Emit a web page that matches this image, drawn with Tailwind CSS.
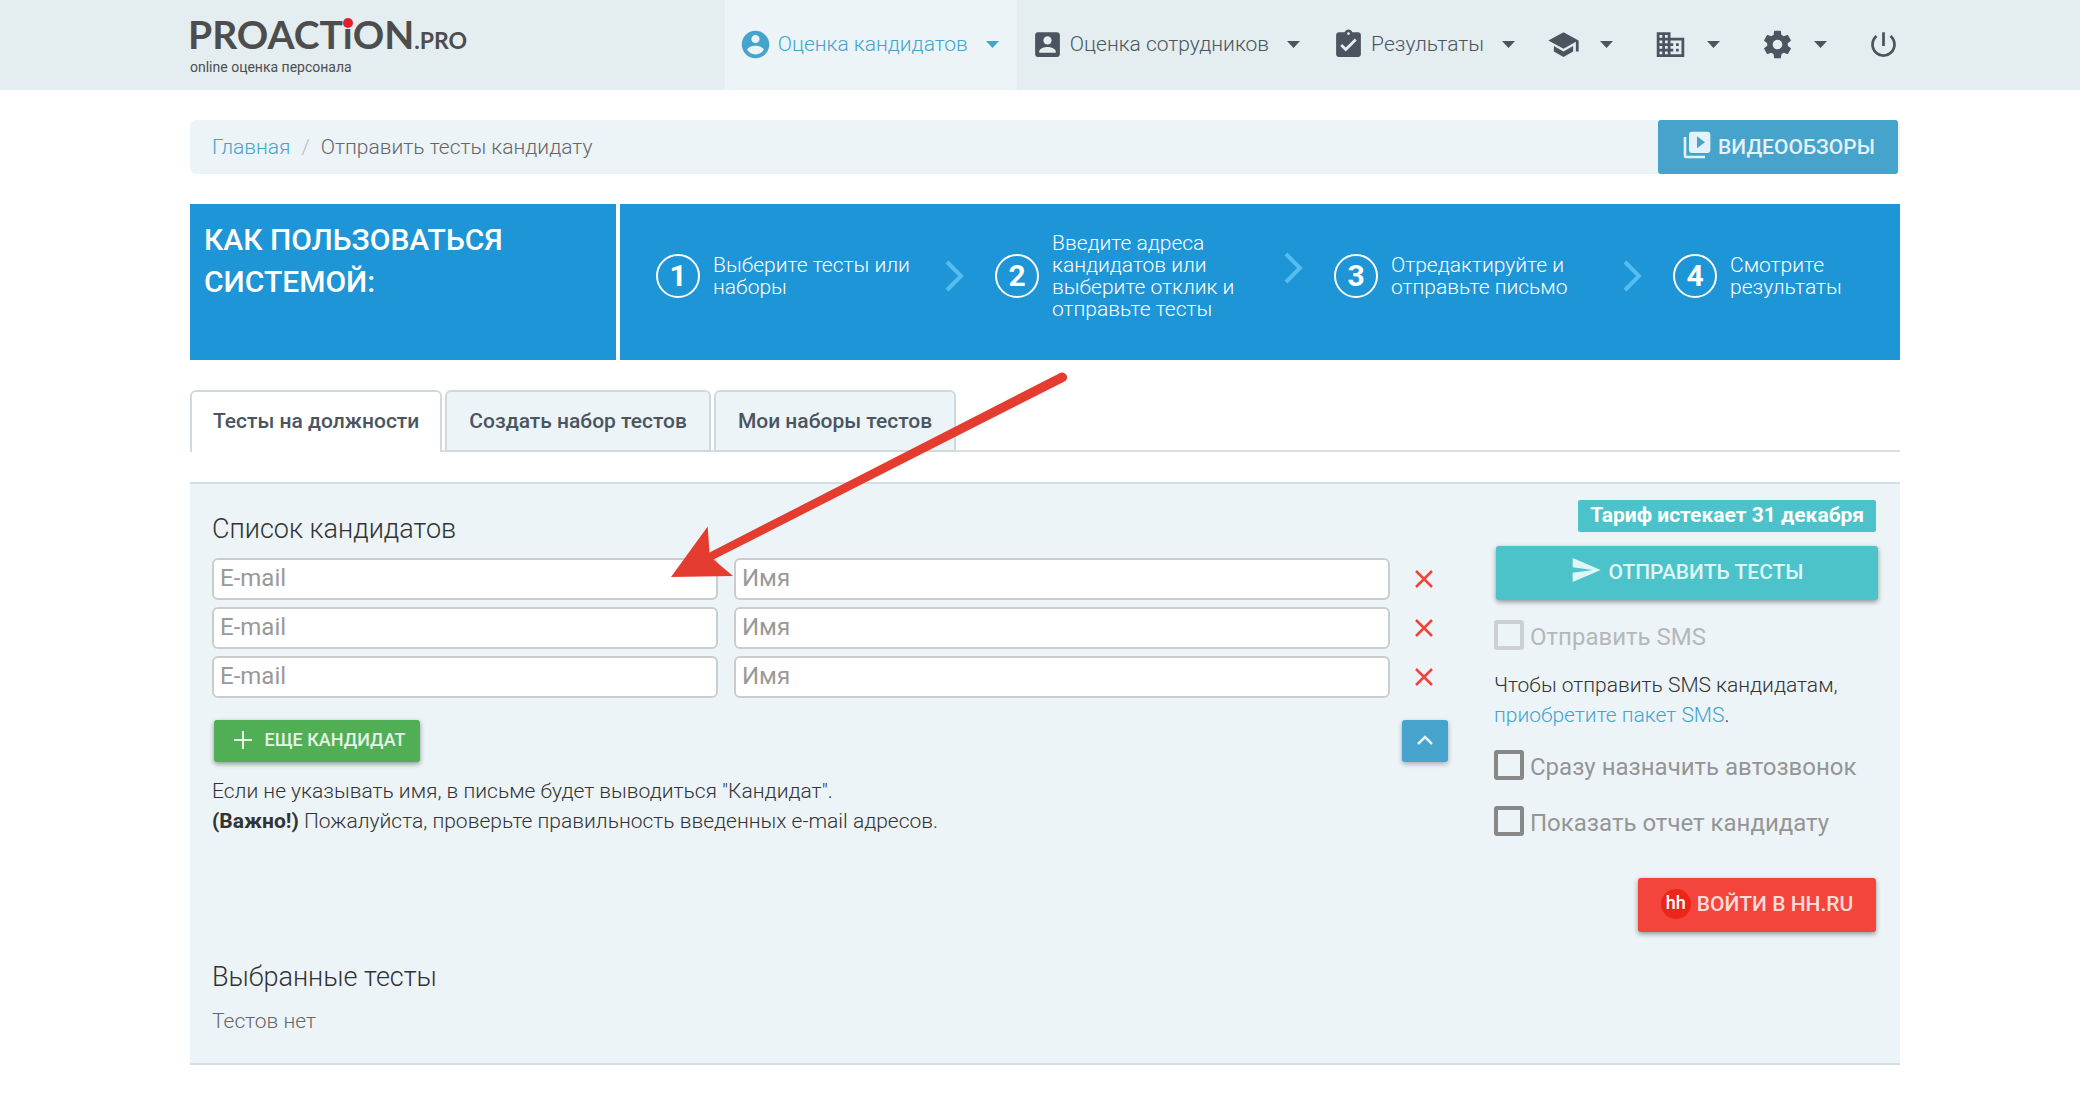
<!DOCTYPE html>
<html lang="ru">
<head>
<meta charset="utf-8">
<meta name="viewport" content="width=device-width, initial-scale=1">
<title>Отправить тесты кандидату</title>
<script src="https://cdn.jsdelivr.net/npm/@tailwindcss/browser@4"></script>
</head>
<body class="bg-white font-['Roboto',sans-serif] text-[21px] leading-[30px] font-light text-[#333]">

<header class="flex h-[90px] items-stretch justify-between bg-[#e4edf0] pr-[180px] pl-[190px]">
  <a href="#" class="flex flex-col pt-[14px] text-[#4d4d4d]">
    <span class="-ml-[2px] font-['Lato',sans-serif] text-[39px] leading-[41px] font-bold">PROACT<span class="relative">i<span class="absolute top-[7px] left-0 size-[10px] rounded-full bg-[#e31e2d]"></span></span>ON<span class="text-[23px]">.PRO</span></span>
    <span class="text-[14px] leading-[12px] font-normal">online оценка персонала</span>
  </a>
  <nav class="flex items-stretch text-[#4a5560]">
    <a href="#" class="flex items-center gap-[18px] bg-[#ecf4f8] pr-[18px] pb-[2px] pl-[14px] text-[#46a3cc]">
      <span class="flex items-center gap-[6px]">
        <svg class="size-[33px]" viewBox="0 0 24 24" fill="currentColor"><path d="M12 2C6.48 2 2 6.48 2 12s4.48 10 10 10 10-4.48 10-10S17.52 2 12 2zm0 3c1.66 0 3 1.34 3 3s-1.34 3-3 3-3-1.34-3-3 1.34-3 3-3zm0 14.2c-2.5 0-4.71-1.28-6-3.22.03-1.99 4-3.08 6-3.08 1.99 0 5.97 1.09 6 3.08-1.29 1.94-3.5 3.22-6 3.22z"/></svg>
        Оценка кандидатов
      </span>
      <svg class="h-[7px] w-[13px]" viewBox="0 0 13 7" fill="currentColor"><path d="M0 0h13L6.500 7z"/></svg>
    </a>
    <a href="#" class="flex items-center gap-[18px] pr-[18px] pb-[2px] pl-[14px]">
      <span class="flex items-center gap-[6px]">
        <svg class="size-[33px]" viewBox="0 0 24 24" fill="currentColor"><path d="M3 5v14c0 1.100.89 2 2 2h14c1.100 0 2-.9 2-2V5c0-1.100-.9-2-2-2H5c-1.110 0-2 .9-2 2zm12 4c0 1.660-1.340 3-3 3s-3-1.340-3-3 1.340-3 3-3 3 1.340 3 3zm-9 8c0-2 4-3.100 6-3.100s6 1.100 6 3.100v1H6v-1z"/></svg>
        Оценка сотрудников
      </span>
      <svg class="h-[7px] w-[13px]" viewBox="0 0 13 7" fill="currentColor"><path d="M0 0h13L6.500 7z"/></svg>
    </a>
    <a href="#" class="flex items-center gap-[18px] pr-[18px] pb-[2px] pl-[14px]">
      <span class="flex items-center gap-[6px]">
        <svg class="size-[33px]" viewBox="0 0 24 24" fill="currentColor"><path d="M19 3h-4.180C14.400 1.840 13.300 1 12 1c-1.300 0-2.400.84-2.820 2H5c-1.100 0-2 .9-2 2v14c0 1.100.9 2 2 2h14c1.100 0 2-.9 2-2V5c0-1.100-.9-2-2-2zm-7 0c.55 0 1 .45 1 1s-.45 1-1 1-1-.45-1-1 .45-1 1-1zm-2 14l-4-4 1.410-1.410L10 14.170l6.590-6.590L18 9l-8 8z"/></svg>
        Результаты
      </span>
      <svg class="h-[7px] w-[13px]" viewBox="0 0 13 7" fill="currentColor"><path d="M0 0h13L6.500 7z"/></svg>
    </a>
    <a href="#" aria-label="Обучение" class="flex items-center gap-[20px] pr-[18px] pb-[2px] pl-[14px]">
      <svg class="size-[33px]" viewBox="0 0 24 24" fill="currentColor"><path d="M5 13.180v4L12 21l7-3.820v-4L12 17l-7-3.820zM12 3L1 9l11 6 9-4.910V17h2V9L12 3z"/></svg>
      <svg class="h-[7px] w-[13px]" viewBox="0 0 13 7" fill="currentColor"><path d="M0 0h13L6.500 7z"/></svg>
    </a>
    <a href="#" aria-label="Компания" class="flex items-center gap-[20px] pr-[18px] pb-[2px] pl-[23px]">
      <svg class="size-[33px]" viewBox="0 0 24 24" fill="currentColor"><path d="M12 7V3H2v18h20V7H12zM6 19H4v-2h2v2zm0-4H4v-2h2v2zm0-4H4V9h2v2zm0-4H4V5h2v2zm4 12H8v-2h2v2zm0-4H8v-2h2v2zm0-4H8V9h2v2zm0-4H8V5h2v2zm10 12h-8v-2h2v-2h-2v-2h2v-2h-2V9h8v10zm-2-8h-2v2h2v-2zm0 4h-2v2h2v-2z"/></svg>
      <svg class="h-[7px] w-[13px]" viewBox="0 0 13 7" fill="currentColor"><path d="M0 0h13L6.500 7z"/></svg>
    </a>
    <a href="#" aria-label="Настройки" class="flex items-center gap-[20px] pr-[18px] pb-[2px] pl-[23px]">
      <svg class="size-[33px]" viewBox="0 0 24 24" fill="currentColor"><path d="M19.430 12.980c.04-.32.07-.64.07-.98s-.03-.66-.07-.98l2.110-1.650c.19-.15.24-.42.12-.64l-2-3.460c-.12-.22-.39-.3-.61-.22l-2.490 1c-.52-.4-1.080-.73-1.690-.98l-.38-2.650C14.460 2.180 14.250 2 14 2h-4c-.25 0-.46.18-.49.42l-.38 2.650c-.61.25-1.170.59-1.690.98l-2.490-1c-.23-.09-.49 0-.61.22l-2 3.460c-.13.22-.07.49.12.64l2.110 1.650c-.04.32-.07.65-.07.98s.03.66.07.98l-2.110 1.650c-.19.15-.24.42-.12.64l2 3.460c.12.22.39.3.61.22l2.490-1c.52.4 1.080.73 1.690.98l.38 2.650c.03.24.24.42.49.42h4c.25 0 .46-.18.49-.42l.38-2.650c.61-.25 1.170-.59 1.690-.98l2.490 1c.23.09.49 0 .61-.22l2-3.460c.12-.22.07-.49-.12-.64l-2.110-1.650zM12 15.500c-1.930 0-3.500-1.570-3.500-3.500s1.570-3.500 3.500-3.500 3.500 1.570 3.500 3.500-1.570 3.500-3.500 3.500z"/></svg>
      <svg class="h-[7px] w-[13px]" viewBox="0 0 13 7" fill="currentColor"><path d="M0 0h13L6.500 7z"/></svg>
    </a>
    <a href="#" aria-label="Выход" class="flex items-center pb-[2px] pl-[22px]">
      <svg class="size-[33px]" viewBox="0 0 24 24" fill="currentColor"><path d="M13 3h-2v10h2V3zm4.830 2.170l-1.420 1.420C17.990 7.860 19 9.810 19 12c0 3.870-3.130 7-7 7s-7-3.130-7-7c0-2.190 1.010-4.140 2.580-5.420L6.170 5.170C4.230 6.820 3 9.260 3 12c0 4.970 4.030 9 9 9s9-4.030 9-9c0-2.740-1.230-5.180-3.170-6.830z"/></svg>
    </a>
  </nav>
</header>

<main class="relative pt-[30px] pr-[180px] pb-[40px] pl-[190px]">

  <div class="flex h-[54px] items-center justify-between rounded-[6px] bg-[#ecf4f8] pr-[2px] pl-[22px]">
    <ol class="flex gap-[11px] text-[#666]">
      <li><a href="#" class="text-[#46a3cc]">Главная</a></li>
      <li class="text-[#bbb]">/</li>
      <li>Отправить тесты кандидату</li>
    </ol>
    <button type="button" class="flex h-[54px] w-[240px] items-center justify-center gap-[5px] rounded-[3px] bg-[#46a3cc] font-medium text-[#e3f1f8]">
      <svg class="mb-[5px] size-[32px]" viewBox="0 0 24 24" fill="currentColor"><path d="M4 6H2v14c0 1.100.9 2 2 2h14v-2H4V6zm16-4H8c-1.100 0-2 .9-2 2v12c0 1.100.9 2 2 2h12c1.100 0 2-.9 2-2V4c0-1.100-.9-2-2-2zm-8 12.500v-9l6 4.500-6 4.500z"/></svg>
      ВИДЕООБЗОРЫ
    </button>
  </div>

  <section class="mt-[30px] grid h-[156px] grid-cols-[426fr_1280fr] gap-[4px] text-white">
    <h2 class="bg-[#1e95d6] px-[14px] pt-[15px] text-[30px] leading-[42px] font-medium">КАК ПОЛЬЗОВАТЬСЯ СИСТЕМОЙ:</h2>
    <ol class="grid grid-cols-[339fr_339fr_339fr_227fr] items-center bg-[#1e95d6] pb-[13px] pl-[36px] leading-[22px]">
      <li class="flex items-center gap-[13px]">
        <span class="flex size-[44px] shrink-0 items-center justify-center rounded-full border-2 border-white text-[30px] font-bold">1</span>
        <span class="flex-1">Выберите тесты или<br>наборы</span>
        <svg class="mr-[30px] h-[32px] w-[20px]" viewBox="0 0 20 32" fill="none" stroke="#56bdf0" stroke-width="4"><path d="M2 2l14 14L2 30"/></svg>
      </li>
      <li class="flex items-center gap-[13px]">
        <span class="flex size-[44px] shrink-0 items-center justify-center rounded-full border-2 border-white text-[30px] font-bold">2</span>
        <span class="flex-1">Введите адреса<br>кандидатов или<br>выберите отклик и<br>отправьте тесты</span>
        <svg class="mr-[30px] mb-[16px] h-[32px] w-[20px]" viewBox="0 0 20 32" fill="none" stroke="#56bdf0" stroke-width="4"><path d="M2 2l14 14L2 30"/></svg>
      </li>
      <li class="flex items-center gap-[13px]">
        <span class="flex size-[44px] shrink-0 items-center justify-center rounded-full border-2 border-white text-[30px] font-bold">3</span>
        <span class="flex-1">Отредактируйте и<br>отправьте письмо</span>
        <svg class="mr-[30px] h-[32px] w-[20px]" viewBox="0 0 20 32" fill="none" stroke="#56bdf0" stroke-width="4"><path d="M2 2l14 14L2 30"/></svg>
      </li>
      <li class="flex items-center gap-[13px]">
        <span class="flex size-[44px] shrink-0 items-center justify-center rounded-full border-2 border-white text-[30px] font-bold">4</span>
        <span class="flex-1">Смотрите<br>результаты</span>
      </li>
    </ol>
  </section>

  <div role="tablist" class="mt-[30px] flex h-[62px] gap-[3px] border-b-2 border-[#ddd] font-medium text-[#4a5560]">
    <button type="button" role="tab" aria-selected="true" class="-mb-[2px] rounded-t-[6px] border-2 border-b-0 border-[#cfdadd] bg-white px-[21px] pb-[2px]">Тесты на должности</button>
    <button type="button" role="tab" aria-selected="false" class="-mb-[2px] rounded-t-[6px] border-2 border-[#cfdadd] bg-[#ecf4f8] px-[22px]">Создать набор тестов</button>
    <button type="button" role="tab" aria-selected="false" class="-mb-[2px] rounded-t-[6px] border-2 border-[#cfdadd] bg-[#ecf4f8] px-[22px]">Мои наборы тестов</button>
  </div>

  <section class="mt-[30px] border-y-2 border-[#d3dfe3] bg-[#ecf4f8] px-[22px] pb-[27px]">
    <div class="flex gap-[46px]">
      <form class="min-w-0 flex-1 pt-[29px]">
        <h3 class="text-[27px] leading-[32px]">Список кандидатов</h3>
        <div class="mt-[13px] flex flex-col gap-[7px]">
          <div class="grid grid-cols-[506fr_656fr_42px] gap-[16px]">
            <input type="email" aria-label="E-mail" placeholder="E-mail" class="h-[42px] min-w-0 rounded-[6px] border-2 border-[#ccc] bg-white px-[6px] pb-[3px] text-[24px] font-normal placeholder:text-[#999]">
            <input type="text" aria-label="Имя" placeholder="Имя" class="h-[42px] min-w-0 rounded-[6px] border-2 border-[#ccc] bg-white px-[6px] pb-[3px] text-[24px] font-normal placeholder:text-[#999]">
            <button type="button" aria-label="Удалить" class="flex items-center justify-start pl-[8px]"><svg class="size-[20px]" viewBox="0 0 20 20" fill="none" stroke="#f44336" stroke-width="2.500"><path d="M2 2l16 16M18 2L2 18"/></svg></button>
          </div>
          <div class="grid grid-cols-[506fr_656fr_42px] gap-[16px]">
            <input type="email" aria-label="E-mail" placeholder="E-mail" class="h-[42px] min-w-0 rounded-[6px] border-2 border-[#ccc] bg-white px-[6px] pb-[3px] text-[24px] font-normal placeholder:text-[#999]">
            <input type="text" aria-label="Имя" placeholder="Имя" class="h-[42px] min-w-0 rounded-[6px] border-2 border-[#ccc] bg-white px-[6px] pb-[3px] text-[24px] font-normal placeholder:text-[#999]">
            <button type="button" aria-label="Удалить" class="flex items-center justify-start pl-[8px]"><svg class="size-[20px]" viewBox="0 0 20 20" fill="none" stroke="#f44336" stroke-width="2.500"><path d="M2 2l16 16M18 2L2 18"/></svg></button>
          </div>
          <div class="grid grid-cols-[506fr_656fr_42px] gap-[16px]">
            <input type="email" aria-label="E-mail" placeholder="E-mail" class="h-[42px] min-w-0 rounded-[6px] border-2 border-[#ccc] bg-white px-[6px] pb-[3px] text-[24px] font-normal placeholder:text-[#999]">
            <input type="text" aria-label="Имя" placeholder="Имя" class="h-[42px] min-w-0 rounded-[6px] border-2 border-[#ccc] bg-white px-[6px] pb-[3px] text-[24px] font-normal placeholder:text-[#999]">
            <button type="button" aria-label="Удалить" class="flex items-center justify-start pl-[8px]"><svg class="size-[20px]" viewBox="0 0 20 20" fill="none" stroke="#f44336" stroke-width="2.500"><path d="M2 2l16 16M18 2L2 18"/></svg></button>
          </div>
        </div>
        <div class="mt-[22px] flex justify-between pl-[2px]">
          <button type="button" class="flex h-[42px] w-[206px] items-center justify-center gap-[12px] rounded-[3px] bg-[#50ae55] pb-[3px] pl-[6px] text-[18px] font-medium text-[#e4f3e5] shadow-[0_2px_5px_rgba(0,0,0,0.4)]">
            <svg class="size-[18px]" viewBox="0 0 18 18" fill="none" stroke="currentColor" stroke-width="2"><path d="M9 0v18M0 9h18"/></svg>
            ЕЩЕ КАНДИДАТ
          </button>
          <button type="button" aria-label="Свернуть" class="flex h-[42px] w-[46px] items-center justify-center rounded-[3px] bg-[#46a3cc] pb-[3px] text-[#e3f1f8] shadow-[0_2px_5px_rgba(0,0,0,0.3)]">
            <svg class="h-[10px] w-[16px]" viewBox="0 0 16 10" fill="none" stroke="currentColor" stroke-width="2.500"><path d="M1 9l7-7 7 7"/></svg>
          </button>
        </div>
        <p class="mt-[14px]">Если не указывать имя, в письме будет выводиться "Кандидат".<br><b class="font-bold">(Важно!)</b> Пожалуйста, проверьте правильность введенных e-mail адресов.</p>
      </form>

      <aside class="flex w-[384px] flex-col items-end pt-[16px]">
        <span class="mr-[2px] h-[32px] rounded-[2px] bg-[#4cc3ca] px-[12px] font-bold text-white">Тариф истекает 31 декабря</span>
        <button type="button" class="mt-[14px] flex h-[54px] w-[382px] items-center justify-center gap-[6px] rounded-[3px] bg-[#4cc3ca] pb-[3px] font-medium text-[#e0f5f6] shadow-[0_2px_5px_rgba(0,0,0,0.4)]">
          <svg class="mb-[3px] size-[32px]" viewBox="0 0 24 24" fill="currentColor"><path d="M2.010 21L23 12 2.010 3 2 10l15 2-15 2z"/></svg>
          ОТПРАВИТЬ ТЕСТЫ
        </button>
        <label class="mt-[20px] flex w-full gap-[6px] text-[24px] leading-[34px] font-normal text-[#b5b8ba]">
          <input type="checkbox" disabled class="size-[30px] appearance-none rounded-[3px] border-4 border-[#cdd1d3]">Отправить SMS
        </label>
        <p class="mt-[16px] w-full">Чтобы отправить SMS кандидатам,<br><a href="#" class="text-[#46a3cc]">приобретите пакет SMS</a>.</p>
        <label class="mt-[20px] flex w-full gap-[6px] text-[24px] leading-[34px] font-normal text-[#959595]">
          <input type="checkbox" class="size-[30px] appearance-none rounded-[3px] border-4 border-[#888]">Сразу назначить автозвонок
        </label>
        <label class="mt-[22px] flex w-full gap-[6px] text-[24px] leading-[34px] font-normal text-[#959595]">
          <input type="checkbox" class="size-[30px] appearance-none rounded-[3px] border-4 border-[#888]">Показать отчет кандидату
        </label>
        <button type="button" class="mt-[38px] mr-[2px] flex h-[54px] w-[238px] items-center justify-center gap-[6px] rounded-[3px] bg-[#f4453c] pb-[3px] font-medium text-[#fddcda] shadow-[0_2px_5px_rgba(0,0,0,0.4)]">
          <span class="flex size-[30px] items-center justify-center rounded-full bg-[#ed2419] pb-[2px] text-[18px] text-white">hh</span>
          ВОЙТИ В HH.RU
        </button>
      </aside>
    </div>
    <h3 class="mt-[29px] text-[27px] leading-[32px]">Выбранные тесты</h3>
    <p class="mt-[13px] text-[#666]">Тестов нет</p>
  </section>

  <!-- Pointer drawn over the form, aimed at the first e-mail field -->
  <svg class="pointer-events-none absolute top-[280px] left-[670px] h-[210px] w-[400px]" viewBox="670 370 400 210" fill="#e53c30"><path d="M671 577L707.700 526.500L709.500 552.500L1060 373A4.600 4.600 0 0 1 1064.500 381.500L713.500 559.500L733 576Z"/></svg>
</main>
</body>
</html>
